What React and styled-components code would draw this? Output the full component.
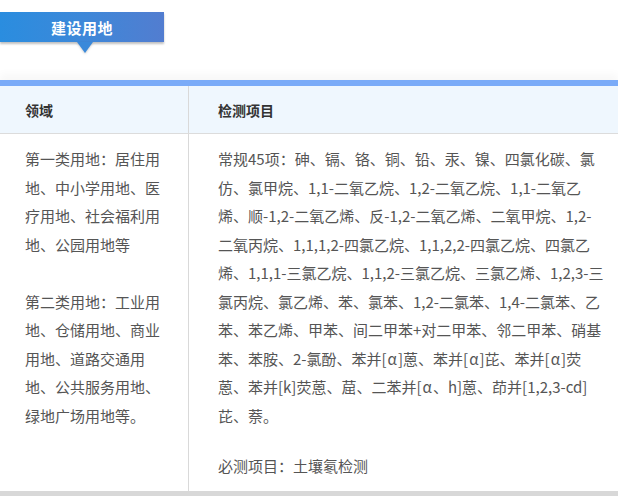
import React from "react";
import styled, { createGlobalStyle } from "styled-components";

const GlobalStyle = createGlobalStyle`
  html, body {
    margin: 0;
    padding: 0;
    background: #fff;
  }
  body {
    font-family: "Noto Sans CJK SC", "Noto Sans", sans-serif;
    color: #555;
  }
`;

const Page = styled.div`
  width: 618px;
  height: 496px;
  overflow: hidden;
  padding-top: 12px;
  box-sizing: border-box;
  display: flex;
  flex-direction: column;
`;

const TabWrap = styled.div`
  position: relative;
  width: 164px;
  height: 30px;
`;

const Tab = styled.div`
  height: 30px;
  display: flex;
  align-items: center;
  justify-content: center;
  background: linear-gradient(90deg, #2a8ddf 0%, #3d88d9 50%, #527dd0 100%);
  box-shadow: 0 2px 2px rgba(0, 0, 0, 0.25);
  color: #fff;
  font-size: 15px;
  font-weight: bold;
  letter-spacing: 0.5px;
`;

const Pointer = styled.div`
  position: absolute;
  left: 77px;
  top: 30px;
  width: 0;
  height: 0;
  border-left: 8px solid transparent;
  border-right: 8px solid transparent;
  border-top: 11px solid #3a89da;
  filter: drop-shadow(0 1px 1px rgba(0, 0, 0, 0.2));
`;

const Table = styled.div`
  margin-top: 38px;
  display: grid;
  grid-template-columns: 188px 1fr;
  grid-template-rows: 48px 1fr;
  border-top: 6px solid #7aabf8;
  box-shadow: 0 -6px 8px rgba(0, 0, 0, 0.03);
  flex: 1;
`;

const HeadCell = styled.div`
  background: #eff7fe;
  border-bottom: 1px solid #dcdcdc;
  border-left: ${p => (p.$divider ? "1px solid #d9d9d9" : "none")};
  display: flex;
  align-items: center;
  padding-left: ${p => (p.$divider ? "29px" : "25px")};
  font-size: 14px;
  font-weight: bold;
  color: #333;
`;

const Cell = styled.div`
  border-left: ${p => (p.$divider ? "1px solid #d9d9d9" : "none")};
  padding: 11px ${p => (p.$divider ? "12px" : "25px")} 0
    ${p => (p.$divider ? "29px" : "25px")};
  font-size: 15px;
  line-height: 28.5px;
  color: #555;
`;

const Para = styled.p`
  margin: 0;
  margin-top: ${p => p.$gap || 0}px;
`;

// greek letters render a touch wider in the original font
const Greek = styled.span`
  padding: 0 1px;
`;

const Footer = styled.div`
  height: 5px;
  background: #d8d8d8;
`;

const a = <Greek>α</Greek>;

export default function App() {
  return (
    <>
      <GlobalStyle />
      <Page>
        <TabWrap>
          <Tab>建设用地</Tab>
          <Pointer />
        </TabWrap>
        <Table>
          <HeadCell>领域</HeadCell>
          <HeadCell $divider>检测项目</HeadCell>
          <Cell>
            <Para>第一类用地：居住用地、中小学用地、医疗用地、社会福利用地、公园用地等</Para>
            <Para $gap={28.5}>
              第二类用地：工业用地、仓储用地、商业用地、道路交通用地、公共服务用地、绿地广场用地等。
            </Para>
          </Cell>
          <Cell $divider>
            <Para>
              常规45项：砷、镉、铬、铜、铅、汞、镍、四氯化碳、氯仿、氯甲烷、1,1-二氧乙烷、1,2-二氧乙烷、1,1-二氧乙烯、顺-1,2-二氧乙烯、反-1,2-二氧乙烯、二氧甲烷、1,2-二氧丙烷、1,1,1,2-四氯乙烷、1,1,2,2-四氯乙烷、四氯乙烯、1,1,1-三氯乙烷、1,1,2-三氯乙烷、三氯乙烯、1,2,3-三氯丙烷、氯乙烯、苯、氯苯、1,2-二氯苯、1,4-二氯苯、乙苯、苯乙烯、甲苯、间二甲苯+对二甲苯、邻二甲苯、硝基苯、苯胺、2-氯酚、苯并[{a}]蒽、苯并[{a}]芘、苯并[{a}]荧蒽、苯并[k]荧蒽、䓛、二苯并[{a}、h]蒽、茚并[1,2,3-cd]芘、萘。
            </Para>
            <Para $gap={21.5}>必测项目：土壤氡检测</Para>
          </Cell>
        </Table>
        <Footer />
      </Page>
    </>
  );
}
